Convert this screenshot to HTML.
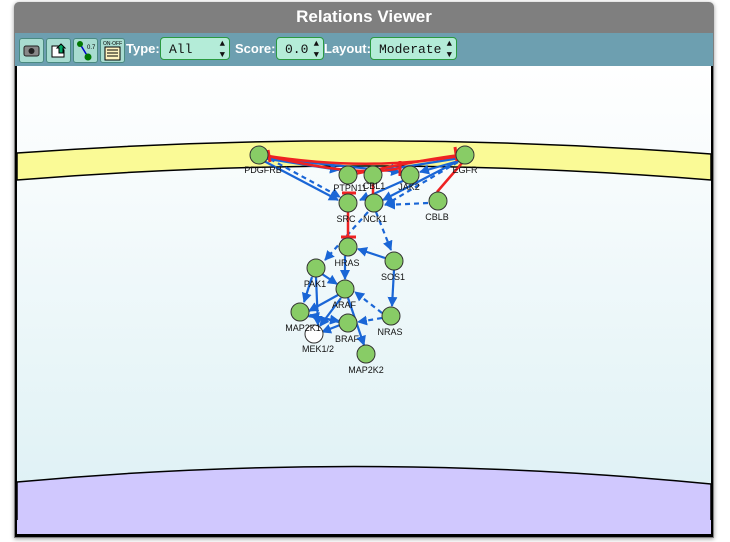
<!DOCTYPE html>
<html><head><style>
body{margin:0;width:730px;height:542px;background:#fff;overflow:hidden;font-family:"Liberation Sans",sans-serif}
#win{position:absolute;left:14px;top:2px;width:700px;height:536px;background:#7f7f7f;border-radius:5px 5px 0 0;box-shadow:0 1px 4px rgba(0,0,0,.4)}
#title{position:absolute;left:0;top:0;width:700px;height:30px;text-align:center;color:#fff;font-weight:bold;font-size:17px;line-height:30px}
#tb{position:absolute;left:1px;top:31px;width:698px;height:33px;background:#6d9fb0}
#cv{position:absolute;left:1px;top:64px;width:698px;height:471px;background:#000}
.btn{position:absolute;top:5px;width:23px;height:23px;background:#a8dcd0;border:1px solid #4a8a80;border-radius:3px}
.lbl{position:absolute;top:8px;color:#fff;font-weight:bold;font-size:13px}
.sel{position:absolute;top:4px;height:23px;background:#b4ecd8;border:1px solid #2a9a40;border-radius:4px;font-family:"Liberation Mono",monospace;font-size:13px;line-height:23px;padding-left:8px;box-sizing:border-box;color:#111}
.sel span{position:absolute;right:4px;top:0;font-size:9px;line-height:11px;padding-top:1px}
</style></head><body>
<div id="win">
<div id="title">Relations Viewer</div>
<div id="tb">
<div class="btn" style="left:4px"><svg width="23" height="23"><rect x="4" y="7" width="15" height="10" rx="2" fill="#888" stroke="#222"/><circle cx="11.5" cy="12" r="3" fill="#222"/></svg></div>
<div class="btn" style="left:31px"><svg width="23" height="23"><path d="M5 7h8l4 4v7H5z" fill="#fff" stroke="#000"/><path d="M12 14V9h-2l4-4 4 4h-2v5z" fill="#0a6" stroke="#000"/></svg></div>
<div class="btn" style="left:58px"><svg width="23" height="23"><line x1="6" y1="5" x2="14" y2="18" stroke="#00c" stroke-width="1.5"/><circle cx="6" cy="5" r="3" fill="#070"/><circle cx="14" cy="18" r="3.5" fill="#070"/><text x="13" y="10" font-size="6" fill="#000">0.7</text></svg></div>
<div class="btn" style="left:85px"><svg width="23" height="23"><text x="2" y="6" font-size="5" fill="#000">ON·OFF</text><rect x="4" y="8" width="15" height="13" fill="#fff3c0" stroke="#000"/><path d="M6 11h11M6 14h11M6 17h11" stroke="#000"/></svg></div>
<div class="lbl" style="left:111px">Type:</div>
<div class="sel" style="left:145px;width:70px">All<span>▲<br>▼</span></div>
<div class="lbl" style="left:220px">Score:</div>
<div class="sel" style="left:261px;width:48px">0.0<span>▲<br>▼</span></div>
<div class="lbl" style="left:309px">Layout:</div>
<div class="sel" style="left:355px;width:87px">Moderate<span>▲<br>▼</span></div>
</div>
<div id="cv">
<svg width="698" height="471" viewBox="15 66 698 471" style="position:absolute;left:0;top:0">
<defs>
<linearGradient id="g" x1="0" y1="0" x2="0" y2="1"><stop offset="0" stop-color="#fff"/><stop offset="1" stop-color="#dcf0f4"/></linearGradient>
<marker id="a" markerWidth="10" markerHeight="10" refX="9" refY="5" orient="auto" markerUnits="userSpaceOnUse"><path d="M0 0L10 5L0 10z" fill="#1a66d6"/></marker>
</defs>
<rect x="17" y="66" width="694" height="468" fill="url(#g)"/>
<path d="M17 153 Q365 128 711 154 L711 180 Q365 152 17 180Z" fill="#fafa96" stroke="#000" stroke-width="1.5"/>
<path d="M17 482 Q365 450 711 484 L711 534 L17 534Z" fill="#d0c8fe" stroke="#000" stroke-width="1.5"/>
<rect x="17" y="520" width="694" height="14" fill="#d0c8fe"/>
<g stroke="#1a66d6" stroke-width="2.2" fill="none" marker-end="url(#a)">
<line x1="262" y1="158" x2="339" y2="170"/>
<line x1="262" y1="160" x2="338" y2="200"/>
<line x1="265" y1="158" x2="400" y2="172" />
<line x1="270" y1="159" x2="340" y2="197" stroke-dasharray="5,4"/>
<line x1="460" y1="158" x2="385" y2="170"/>
<line x1="460" y1="160" x2="383" y2="200"/>
<line x1="462" y1="160" x2="420" y2="172"/>
<line x1="458" y1="162" x2="385" y2="205" stroke-dasharray="5,4"/>
<line x1="428" y1="203" x2="386" y2="205" stroke-dasharray="5,4"/>
<line x1="405" y1="180" x2="360" y2="200"/>
<line x1="376" y1="212" x2="391" y2="250" stroke-dasharray="5,4"/>
<line x1="368" y1="212" x2="325" y2="260" stroke-dasharray="5,4"/>
<line x1="385" y1="258" x2="358" y2="249"/>
<line x1="345" y1="256" x2="345" y2="279"/>
<line x1="322" y1="274" x2="337" y2="284"/>
<line x1="312" y1="277" x2="304" y2="302"/>
<line x1="316" y1="277" x2="318" y2="325"/>
<line x1="338" y1="295" x2="309" y2="311"/>
<line x1="341" y1="298" x2="320" y2="326"/>
<line x1="348" y1="298" x2="364" y2="345"/>
<line x1="394" y1="270" x2="392" y2="306"/>
<line x1="382" y1="313" x2="355" y2="292" stroke-dasharray="5,4"/>
<line x1="382" y1="318" x2="358" y2="322" stroke-dasharray="5,4"/>
<line x1="339" y1="322" x2="310" y2="315"/>
<line x1="340" y1="325" x2="322" y2="332"/>
<line x1="308" y1="316" x2="339" y2="321"/>
</g>
<g stroke="#e22" stroke-width="2.5" fill="none">
<path d="M262 155 Q365 172 460 156"/>
<path d="M268 156 Q360 178 400 168"/>
<path d="M350 175 Q420 160 460 155"/>
<line x1="348" y1="212" x2="348" y2="236"/>
<line x1="373" y1="184" x2="373" y2="195"/>
<line x1="437" y1="192" x2="462" y2="163"/>
<line x1="268" y1="150" x2="270" y2="162" stroke-width="3"/>
<line x1="455" y1="147" x2="457" y2="161" stroke-width="3"/>
<line x1="400" y1="161" x2="400" y2="176" stroke-width="3"/>
<line x1="341" y1="237" x2="356" y2="237" stroke-width="3"/>
<line x1="342" y1="193" x2="356" y2="193" stroke-width="3"/>
</g>
<g fill="#88cc66" stroke="#333" stroke-width="1">
<circle cx="259" cy="155" r="9"/><circle cx="465" cy="155" r="9"/>
<circle cx="348" cy="175" r="9"/><circle cx="373" cy="175" r="9"/><circle cx="410" cy="175" r="9"/>
<circle cx="348" cy="203" r="9"/><circle cx="374" cy="203" r="9"/><circle cx="438" cy="201" r="9"/>
<circle cx="348" cy="247" r="9"/><circle cx="394" cy="261" r="9"/><circle cx="316" cy="268" r="9"/>
<circle cx="345" cy="289" r="9"/><circle cx="300" cy="312" r="9"/><circle cx="348" cy="323" r="9"/>
<circle cx="391" cy="316" r="9"/><circle cx="314" cy="334" r="9" fill="#fff"/><circle cx="366" cy="354" r="9"/>
</g>
<g font-size="9" text-anchor="middle" fill="#111" font-family="Liberation Sans,sans-serif">
<text x="263" y="173">PDGFRB</text><text x="465" y="173">EGFR</text>
<text x="350" y="191">PTPN11</text><text x="374" y="189">CBL1</text><text x="409" y="190">JAK2</text>
<text x="346" y="222">SRC</text><text x="375" y="222">NCK1</text><text x="437" y="220">CBLB</text>
<text x="347" y="266">HRAS</text><text x="393" y="280">SOS1</text><text x="315" y="287">PAK1</text>
<text x="344" y="308">ARAF</text><text x="303" y="331">MAP2K1</text><text x="347" y="342">BRAF</text>
<text x="390" y="335">NRAS</text><text x="318" y="352">MEK1/2</text><text x="366" y="373">MAP2K2</text>
</g>
</svg>
</div>
</div>
</body></html>
